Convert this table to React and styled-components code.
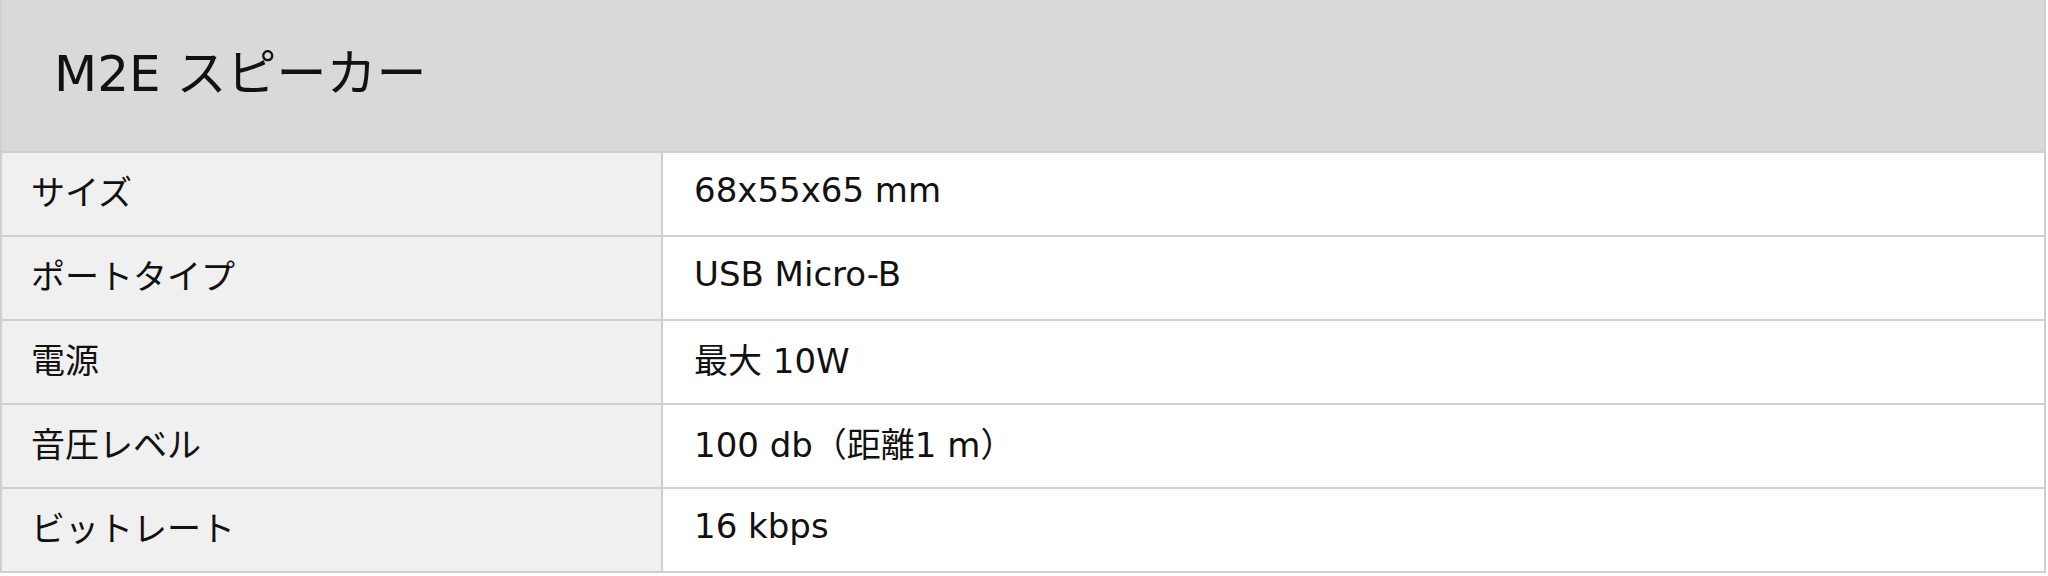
import React from 'react';
import styled, { createGlobalStyle } from 'styled-components';

const GlobalStyle = createGlobalStyle`
  body {
    margin: 0;
    background: #ffffff;
    font-family: "DejaVu Sans", "Noto Sans CJK JP", sans-serif;
    color: #111111;
  }
`;

const specs = [
  { label: 'サイズ', value: '68x55x65 mm' },
  { label: 'ポートタイプ', value: 'USB Micro-B' },
  { label: '電源', value: '最大 10W' },
  { label: '音圧レベル', value: '100 db（距離1 m）' },
  { label: 'ビットレート', value: '16 kbps' },
];

const Table = styled.div`
  width: 2046px;
  box-sizing: border-box;
  border-left: 2px solid #cfcfcf;
  border-right: 2px solid #cfcfcf;
`;

const Header = styled.div`
  box-sizing: border-box;
  height: 153px;
  display: flex;
  align-items: center;
  padding: 0 0 14px 52px;
  background: #d9d9d9;
  border-bottom: 2px solid #cfcfcf;
  font-size: 50px;
`;

const Row = styled.div`
  display: grid;
  grid-template-columns: 661px 1fr;
  height: 82px;
  border-bottom: 2px solid #cfcfcf;
`;

const Cell = styled.div`
  display: flex;
  align-items: center;
  padding: 0 0 8px ${(p) => (p.$label ? '29px' : '31px')};
  font-size: 34px;
  background: ${(p) => (p.$label ? '#f0f0f0' : '#ffffff')};
  border-right: ${(p) => (p.$label ? '2px solid #cfcfcf' : 'none')};
`;

const App = () => {
  return (
    <>
      <GlobalStyle />
      <Table>
        <Header>M2E スピーカー</Header>
        {specs.map((s) => (
          <Row key={s.label}>
            <Cell $label>{s.label}</Cell>
            <Cell>{s.value}</Cell>
          </Row>
        ))}
      </Table>
    </>
  );
};

export default App;
